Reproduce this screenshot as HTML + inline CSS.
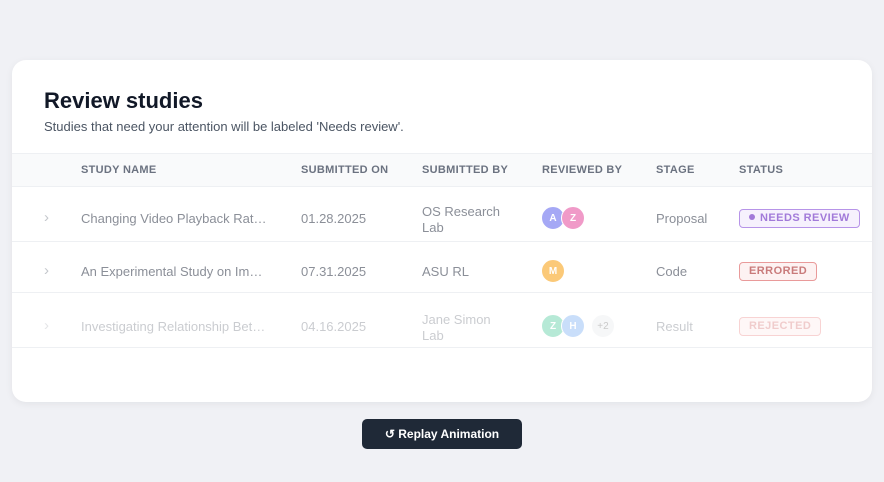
<!DOCTYPE html>
<html><head><meta charset="utf-8"><style>
*{margin:0;padding:0;box-sizing:border-box}
body{width:884px;height:482px;background:#f0f1f5;font-family:"Liberation Sans",sans-serif;position:relative;overflow:hidden}
.card{position:absolute;left:12px;top:60px;width:860px;height:342px;background:#fff;border-radius:14px;box-shadow:0 2px 8px rgba(0,0,0,.06);overflow:hidden}
.a{position:absolute;white-space:nowrap}
h1{position:absolute;left:32px;top:28px;font-size:22px;font-weight:700;color:#111827}
.sub{left:32px;top:59px;font-size:13px;color:#4b5563}
.hd{position:absolute;left:0;top:93px;width:860px;height:34px;background:#f9fafb;border-top:1px solid #eef0f3;border-bottom:1px solid #eef0f3}
.th{top:104px;font-size:11px;font-weight:700;color:#6b7280;letter-spacing:.3px}
.line{position:absolute;left:0;width:860px;height:1px;background:#eef0f3}
.t{font-size:13px;color:#8b8f98}
.chev{font-size:15px;color:#c4c7cc}
.av{position:absolute;width:24px;height:24px;border-radius:50%;color:#fff;font-size:10px;font-weight:700;display:flex;align-items:center;justify-content:center;border:1.5px solid #fff}
.badge{position:absolute;height:19px;border-radius:4px;font-size:11px;font-weight:700;letter-spacing:.45px;line-height:17px;padding:0 9px}
.fade{opacity:.45}
.btn{position:absolute;left:362px;top:419px;width:160px;height:30px;background:#1f2937;border-radius:5px;color:#fff;font-size:12px;font-weight:700;text-align:center;line-height:30px}
</style></head><body>
<div class="card">
<h1>Review studies</h1>
<div class="a sub">Studies that need your attention will be labeled 'Needs review'.</div>
<div class="hd"></div>
<div class="a th" style="left:69px">STUDY NAME</div>
<div class="a th" style="left:289px">SUBMITTED ON</div>
<div class="a th" style="left:410px">SUBMITTED BY</div>
<div class="a th" style="left:530px">REVIEWED BY</div>
<div class="a th" style="left:644px">STAGE</div>
<div class="a th" style="left:727px">STATUS</div>

<div class="a chev" style="left:32px;top:149px">›</div>
<div class="a t" style="left:69px;top:151px">Changing Video Playback Rat…</div>
<div class="a t" style="left:289px;top:151px">01.28.2025</div>
<div class="a t" style="left:410px;top:144px;line-height:16px">OS Research<br>Lab</div>
<div class="av" style="left:529px;top:146px;background:#a5a8f5">A</div>
<div class="av" style="left:549px;top:146px;background:#f09ac8">Z</div>
<div class="a t" style="left:644px;top:151px">Proposal</div>
<div class="badge" style="left:727px;top:149px;border:1px solid #b794e8;background:#f6f1fd;color:#a27ad9"><span style="display:inline-block;width:6px;height:6px;border-radius:50%;background:#a27ad9;margin-right:5px;vertical-align:1px"></span>NEEDS REVIEW</div>
<div class="line" style="top:181px"></div>

<div class="a chev" style="left:32px;top:202px">›</div>
<div class="a t" style="left:69px;top:204px">An Experimental Study on Im…</div>
<div class="a t" style="left:289px;top:204px">07.31.2025</div>
<div class="a t" style="left:410px;top:204px">ASU RL</div>
<div class="av" style="left:529px;top:199px;background:#fbc978">M</div>
<div class="a t" style="left:644px;top:204px">Code</div>
<div class="badge" style="left:727px;top:202px;border:1px solid #e99a9a;background:#fdf2f2;color:#c97b7b">ERRORED</div>
<div class="line" style="top:232px"></div>

<div class="fade">
<div class="a chev" style="left:32px;top:257px">›</div>
<div class="a t" style="left:69px;top:259px">Investigating Relationship Bet…</div>
<div class="a t" style="left:289px;top:259px">04.16.2025</div>
<div class="a t" style="left:410px;top:252px;line-height:16px">Jane Simon<br>Lab</div>
<div class="av" style="left:529px;top:254px;background:#5fd0a6">Z</div>
<div class="av" style="left:549px;top:254px;background:#8ab8f5">H</div>
<div class="av" style="left:579px;top:254px;background:#eceef1;color:#888;font-weight:400">+2</div>
<div class="a t" style="left:644px;top:259px">Result</div>
<div class="badge" style="left:727px;top:257px;border:1px solid #f0a0a0;background:#fdeeee;color:#e09090">REJECTED</div>
</div>
<div class="line" style="top:287px"></div>
</div>
<div class="btn">↺ Replay Animation</div>
</body></html>
